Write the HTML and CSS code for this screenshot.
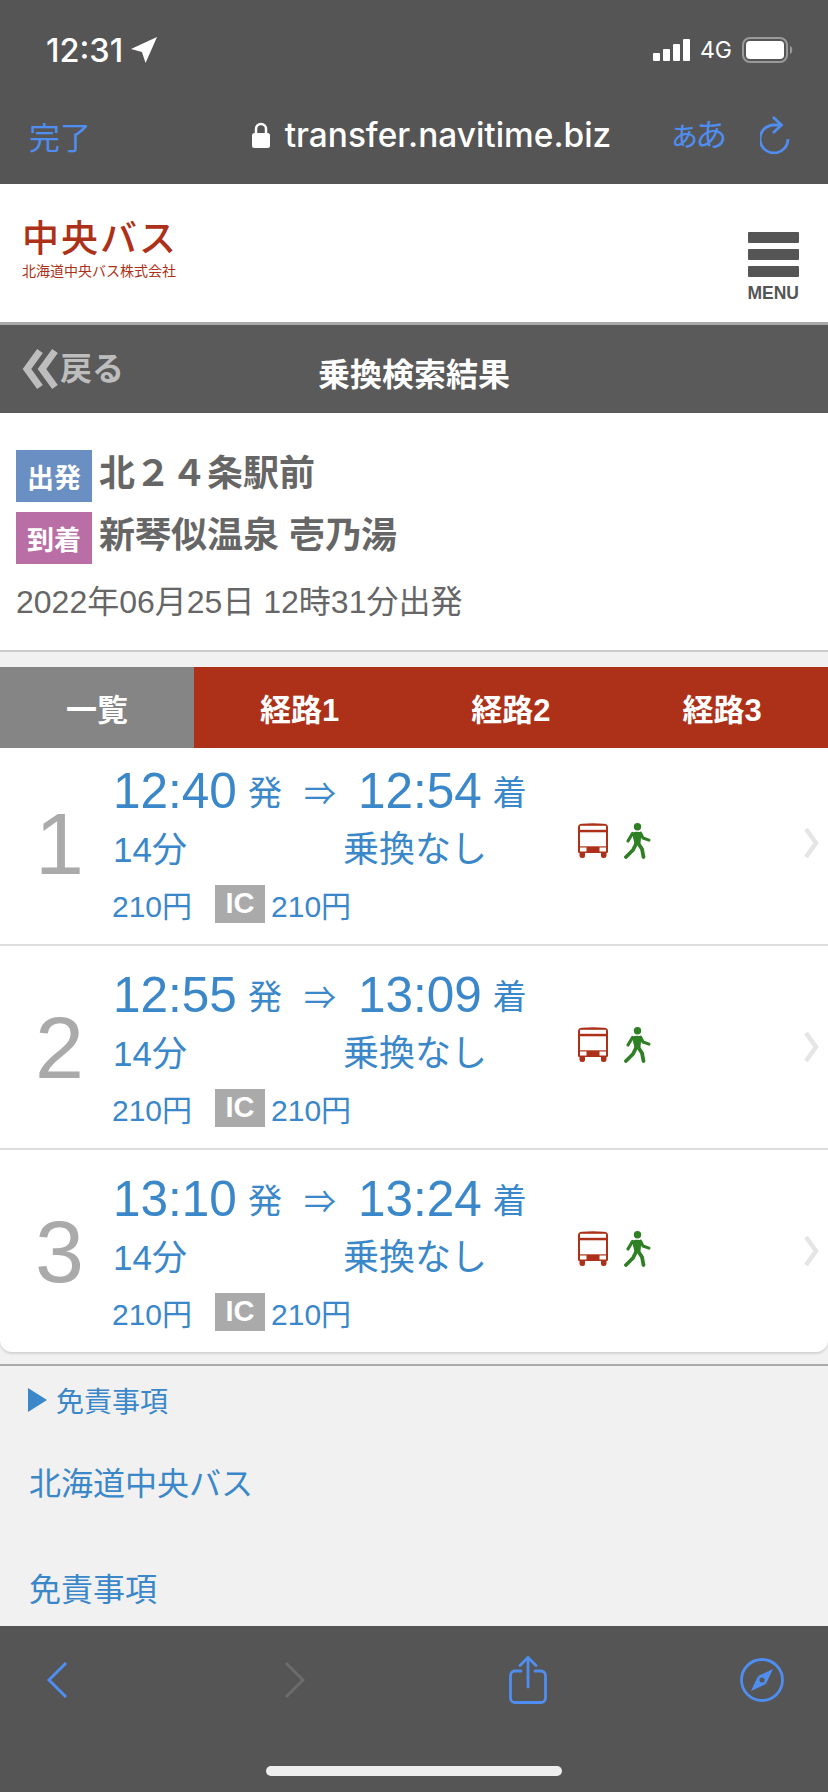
FILE: index.html
```html
<!DOCTYPE html>
<html lang="ja">
<head>
    <meta charset="UTF-8">
    <meta name="viewport" content="width=device-width, initial-scale=1.0">
    <title>乗換検索結果</title>
    <link rel="stylesheet" href="styles.css">
</head>
<body>
    <div class="status-bar">
        <div class="status-time">12:31
            <svg width="26" height="26" viewBox="0 0 25 25"><path d="M25 0 L0 11.500 L10.500 14.500 L14 25 Z" fill="#fff"/></svg>
        </div>
        <div class="status-right">
            <div class="signal"><span class="s1"></span><span class="s2"></span><span class="s3"></span><span class="s4"></span></div>
            <span class="network">4G</span>
            <svg width="52" height="26" viewBox="0 0 52 26"><rect x="1" y="1" width="44" height="24" rx="7" fill="none" stroke="#9a9a9a" stroke-width="2"/><rect x="4" y="4" width="38" height="18" rx="4" fill="#fff"/><path d="M48 9 C51 10 51 16 48 17 Z" fill="#9a9a9a"/></svg>
        </div>
    </div>
    <div class="url-bar">
        <span class="done">完了</span>
        <div class="url">
            <svg width="18" height="26" viewBox="0 0 18 26"><path d="M4 12 V7 a5 5 0 0 1 10 0 V12" fill="none" stroke="#fff" stroke-width="2.500"/><rect x="0" y="11" width="18" height="15" rx="2.500" fill="#fff"/></svg>
            <span>transfer.navitime.biz</span>
        </div>
        <span class="aa">ぁあ</span>
        <svg width="32" height="38" viewBox="0 0 32 38"><path d="M20 9 H14 A14 14 0 1 0 28 23" fill="none" stroke="#4f8ef0" stroke-width="2.800"/><path d="M13 1 L21.500 9 L13 17" fill="none" stroke="#4f8ef0" stroke-width="2.800"/></svg>
    </div>

    <header class="site-header">
        <div class="logo">
            <div class="logo-main">中央バス</div>
            <div class="logo-sub">北海道中央バス株式会社</div>
        </div>
        <div class="menu">
            <span class="menu-bar"></span>
            <span class="menu-bar"></span>
            <span class="menu-bar"></span>
            <span class="menu-label">MENU</span>
        </div>
    </header>

    <div class="title-bar">
        <div class="back">
            <svg width="36" height="42" viewBox="0 0 36 42"><path d="M18 3 L5 21 L18 39 M33 3 L20 21 L33 39" fill="none" stroke="#bdbdbd" stroke-width="7"/></svg>
            <span class="back-label">戻る</span>
        </div>
        <h1>乗換検索結果</h1>
    </div>

    <section class="search-info">
        <div class="place"><span class="badge badge-from">出発</span><span class="place-name">北２４条駅前</span></div>
        <div class="place"><span class="badge badge-to">到着</span><span class="place-name">新琴似温泉 壱乃湯</span></div>
        <p class="search-date">2022年06月25日 12時31分出発</p>
    </section>

    <nav class="tabs">
        <div class="tab tab-list">一覧</div>
        <div class="tab">経路1</div>
        <div class="tab">経路2</div>
        <div class="tab">経路3</div>
    </nav>

    <div class="routes">
        <div class="route">
            <div class="route-num">1</div>
            <div class="route-body">
                <div class="route-times"><span class="t">12:40</span><span class="u">発</span><span class="arrow">⇒</span><span class="t">12:54</span><span class="u">着</span></div>
                <div class="route-mid"><span class="mins">14分</span><span class="transfer">乗換なし</span></div>
                <div class="route-fare"><span class="cash">210円</span><span class="ic">IC</span><span>210円</span></div>
            </div>
            <div class="route-icons">
                <svg width="30" height="35" viewBox="0 0 30 35"><use href="#bus"/></svg>
                <svg width="27" height="36" viewBox="0 0 27 36"><use href="#walk"/></svg>
            </div>
            <svg class="route-chevron" width="16" height="32" viewBox="0 0 16 32"><path d="M3 2 L13 16 L3 30" fill="none" stroke="#e5e5e5" stroke-width="4.500"/></svg>
        </div>
        <div class="route">
            <div class="route-num">2</div>
            <div class="route-body">
                <div class="route-times"><span class="t">12:55</span><span class="u">発</span><span class="arrow">⇒</span><span class="t">13:09</span><span class="u">着</span></div>
                <div class="route-mid"><span class="mins">14分</span><span class="transfer">乗換なし</span></div>
                <div class="route-fare"><span class="cash">210円</span><span class="ic">IC</span><span>210円</span></div>
            </div>
            <div class="route-icons">
                <svg width="30" height="35" viewBox="0 0 30 35"><use href="#bus"/></svg>
                <svg width="27" height="36" viewBox="0 0 27 36"><use href="#walk"/></svg>
            </div>
            <svg class="route-chevron" width="16" height="32" viewBox="0 0 16 32"><path d="M3 2 L13 16 L3 30" fill="none" stroke="#e5e5e5" stroke-width="4.500"/></svg>
        </div>
        <div class="route">
            <div class="route-num">3</div>
            <div class="route-body">
                <div class="route-times"><span class="t">13:10</span><span class="u">発</span><span class="arrow">⇒</span><span class="t">13:24</span><span class="u">着</span></div>
                <div class="route-mid"><span class="mins">14分</span><span class="transfer">乗換なし</span></div>
                <div class="route-fare"><span class="cash">210円</span><span class="ic">IC</span><span>210円</span></div>
            </div>
            <div class="route-icons">
                <svg width="30" height="35" viewBox="0 0 30 35"><use href="#bus"/></svg>
                <svg width="27" height="36" viewBox="0 0 27 36"><use href="#walk"/></svg>
            </div>
            <svg class="route-chevron" width="16" height="32" viewBox="0 0 16 32"><path d="M3 2 L13 16 L3 30" fill="none" stroke="#e5e5e5" stroke-width="4.500"/></svg>
        </div>
    </div>

    <footer class="page-foot">
        <div class="foot-head"><span class="tri"></span>免責事項</div>
        <div class="foot-link">北海道中央バス</div>
        <div class="foot-link">免責事項</div>
    </footer>

    <div class="toolbar">
        <div class="toolbar-icons">
            <svg width="22" height="38" viewBox="0 0 22 38"><path d="M20 2 L3 19 L20 36" fill="none" stroke="#4f8ef0" stroke-width="3"/></svg>
            <svg width="22" height="38" viewBox="0 0 22 38"><path d="M2 2 L19 19 L2 36" fill="none" stroke="#6b6b6b" stroke-width="3"/></svg>
            <svg width="38" height="48" viewBox="0 0 38 48"><path d="M12 15 H6 a4.500 4.500 0 0 0 -4.500 4.500 V42 a4.500 4.500 0 0 0 4.500 4.500 H32 a4.500 4.500 0 0 0 4.500 -4.500 V19.500 a4.500 4.500 0 0 0 -4.500 -4.500 H26 M19 31 V2 M11 9.500 L19 1.500 L27 9.500" fill="none" stroke="#4f8ef0" stroke-width="2.800" stroke-linecap="round"/></svg>
            <svg width="44" height="44" viewBox="0 0 44 44"><circle cx="22" cy="22" r="20.500" fill="none" stroke="#4f8ef0" stroke-width="2.800"/><path d="M33 11 L26 26 L18 18 Z" fill="#4f8ef0"/><path d="M11 33 L18 18 L26 26 Z" fill="#4f8ef0"/><circle cx="22" cy="22" r="2.500" fill="#555"/></svg>
        </div>
        <div class="home-bar"></div>
    </div>

    <svg class="defs" width="0" height="0">
        <symbol id="bus" viewBox="0 0 30 35">
            <path d="M0 4 Q0 1 4 .8 Q15 -.5 26 .8 Q30 1 30 4 V29 Q30 30 28.500 30 V33 Q28.500 35 26 35 H25 Q23 35 23 33 V30 H7 V33 Q7 35 5 35 H4 Q1.500 35 1.500 33 V30 Q0 30 0 29 Z" fill="#ad3118"/>
            <rect x="2" y="2.800" width="26" height="4" fill="#fff"/>
            <rect x="2" y="9.300" width="26" height="14" fill="#fff"/>
            <rect x="2" y="24.500" width="6.500" height="4" fill="#fff"/>
            <rect x="21.500" y="24.500" width="6.500" height="4" fill="#fff"/>
        </symbol>
        <symbol id="walk" viewBox="0 0 27 36">
            <circle cx="13.500" cy="3.800" r="3.700" fill="#2f7f24"/>
            <path d="M8 10 Q13 7.500 17.500 10 L16.500 20 L11 23 Z" fill="#2f7f24"/>
            <g fill="none" stroke="#2f7f24" stroke-linecap="round" stroke-linejoin="round">
                <path d="M8.500 10.500 L4 18" stroke-width="3.200"/>
                <path d="M16.500 10 L19 15 L25 17.200" stroke-width="3"/>
                <path d="M12.500 20 L9 27 L2 34" stroke-width="3.800"/>
                <path d="M14 20 L18 26 L19.500 34" stroke-width="3.800"/>
            </g>
        </symbol>
    </svg>
</body>
</html>
```

FILE: styles.css
```css
* {
    box-sizing: border-box;
}
html, body {
    margin: 0;
    padding: 0;
}
body {
    width: 828px;
    height: 1792px;
    overflow: hidden;
    display: flex;
    flex-direction: column;
    background-color: #f1f1f1;
    font-family: "Liberation Sans", "Noto Sans CJK JP", sans-serif;
}

/* iOS chrome */
.status-bar {
    height: 86px;
    flex: none;
    background-color: #555;
    color: white;
    display: flex;
    justify-content: space-between;
    align-items: center;
    padding: 14px 34px 0 46px;
    font-family: Inter, sans-serif;
}
.status-time {
    display: flex;
    align-items: center;
    gap: 8px;
    font-size: 32.500px;
    font-weight: 500;
}
.status-right {
    display: flex;
    align-items: center;
    gap: 10px;
}
.signal {
    display: flex;
    align-items: flex-end;
    gap: 3px;
    height: 22px;
}
.signal span {
    width: 7px;
    background: white;
    border-radius: 1px;
}
.s1 { height: 8px; }
.s2 { height: 12px; }
.s3 { height: 17px; }
.s4 { height: 22px; }
.network {
    font-size: 23px;
    font-weight: 400;
}
.url-bar {
    height: 98px;
    flex: none;
    background-color: #555;
    display: flex;
    align-items: center;
    padding: 0 36px 0 29px;
    color: #4f8ef0;
    font-family: "Noto Sans CJK JP", sans-serif;
}
.done {
    font-size: 31px;
    width: 223px;
}
.url {
    display: flex;
    align-items: center;
    gap: 15px;
    width: 417px;
    color: white;
    font-family: Inter, sans-serif;
    font-size: 33.400px;
    font-weight: 500;
}
.aa {
    font-size: 32px;
    letter-spacing: -5px;
    width: 92px;
    margin-top: -6px;
}

/* site header */
.site-header {
    height: 141px;
    flex: none;
    background: white;
    border-bottom: 3px solid #aaa;
    display: flex;
    justify-content: space-between;
    padding: 0 29px 0 22px;
}
.logo {
    padding-top: 33px;
    color: #ad3118;
}
.logo-main {
    font-size: 37px;
    line-height: 46px;
    letter-spacing: 2px;
    font-weight: 500;
}
.logo-sub {
    font-size: 14px;
    line-height: 18px;
    margin-top: -1px;
}
.menu {
    padding-top: 48px;
    display: flex;
    flex-direction: column;
    align-items: center;
    gap: 6px;
}
.menu-bar {
    width: 51px;
    height: 11px;
    background-color: #555;
    border-radius: 1px;
}
.menu-label {
    font-size: 17.500px;
    font-weight: bold;
    color: #555;
}
.title-bar {
    height: 88px;
    flex: none;
    background-color: #5a5a5a;
    position: relative;
    display: flex;
    align-items: center;
    justify-content: center;
}
.back {
    position: absolute;
    left: 22px;
    top: 23px;
    display: flex;
    align-items: center;
    gap: 2px;
    color: #bdbdbd;
    font-size: 32px;
    font-weight: bold;
}
.back-label {
    margin-top: -6px;
}
h1 {
    margin: 6px 0 0;
    color: white;
    font-size: 32px;
    font-weight: bold;
}

/* search info */
.search-info {
    height: 239px;
    flex: none;
    background: white;
    border-bottom: 2px solid #ccc;
    padding: 37px 16px 0;
    color: #666;
}
.place {
    display: flex;
    align-items: center;
    gap: 7px;
    margin-bottom: 10px;
}
.badge {
    width: 76px;
    height: 52px;
    display: flex;
    align-items: center;
    justify-content: center;
    color: white;
    font-size: 27px;
    font-weight: bold;
}
.badge-from { background-color: #6a8fc3; }
.badge-to { background-color: #b96fa6; }
.place-name {
    font-size: 36px;
    font-weight: bold;
    margin-top: -12px;
}
.search-date {
    margin: 12px 0 0;
    font-size: 32px;
}

/* tabs */
.tabs {
    margin-top: 15px;
    height: 81px;
    flex: none;
    display: flex;
    background-color: #ad3118;
}
.tab {
    width: 211.300px;
    display: flex;
    align-items: center;
    justify-content: center;
    color: white;
    font-size: 31px;
    font-weight: bold;
}
.tab-list {
    width: 194px;
    background-color: #858585;
}

/* route list */
.routes {
    flex: none;
    background: white;
    border-radius: 0 0 12px 12px;
    box-shadow: 0 2px 2px rgba(0, 0, 0, 0.12);
}
.route {
    height: 204px;
    padding-top: 20px;
    border-bottom: 2px solid #ddd;
    display: flex;
    align-items: flex-start;
    color: #3a87c9;
}
.route:first-child {
    height: 198px;
    padding-top: 14px;
}
.route:last-child {
    height: 202px;
    border-bottom: none;
}
.route-num {
    width: 113px;
    flex: none;
    margin-top: 31px;
    text-align: center;
    padding-left: 6px;
    font-size: 88px;
    color: #aaa;
}
.route-body {
    width: 465px;
    flex: none;
}
.route-times {
    display: flex;
    align-items: baseline;
    height: 59.500px;
}
.t {
    font-size: 49.500px;
}
.u {
    font-size: 34px;
    margin: 0 11px;
    transform: translateY(-3px);
}
.arrow {
    font-size: 32px;
    width: 54px;
    margin-left: 11px;
    transform: translateY(-3px);
}
.route-mid {
    display: flex;
    height: 49px;
    margin-bottom: 10px;
    align-items: center;
}
.mins {
    width: 230px;
    font-size: 35px;
}
.transfer {
    font-size: 36px;
}
.route-fare {
    display: flex;
    align-items: center;
    font-size: 30px;
    height: 46px;
    margin-left: -1px;
}
.cash {
    margin-right: 23px;
}
.ic {
    width: 50px;
    height: 38px;
    margin-right: 6px;
    background-color: #aaa;
    color: white;
    font-size: 29px;
    font-weight: bold;
    display: flex;
    align-items: center;
    justify-content: center;
}
.route-icons {
    width: 225px;
    flex: none;
    display: flex;
    gap: 16px;
    margin-top: 61px;
}
.route-chevron {
    flex: none;
    margin-top: 65px;
}
.defs {
    position: absolute;
}

/* bottom of page */
.page-foot {
    margin-top: 12px;
    flex: 1;
    border-top: 2px solid #aaa;
    padding: 14px 29px 0;
    color: #3a87c9;
    overflow: hidden;
}
.foot-head {
    display: flex;
    align-items: center;
    font-size: 28px;
    margin-left: -1px;
}
.tri {
    width: 0;
    height: 0;
    margin-right: 9px;
    border-left: 19px solid #3a87c9;
    border-top: 12px solid transparent;
    border-bottom: 12px solid transparent;
}
.foot-link {
    font-size: 32px;
    margin-top: 38px;
}
.foot-link + .foot-link {
    margin-top: 60px;
}
.toolbar {
    height: 166px;
    flex: none;
    background-color: #555;
    position: relative;
}
.toolbar-icons {
    height: 108px;
    padding-left: 46px;
    display: grid;
    grid-template-columns: 238px 225px 231px auto;
    justify-items: start;
    align-items: center;
}
.home-bar {
    position: absolute;
    left: 266px;
    top: 140px;
    width: 296px;
    height: 10px;
    border-radius: 5px;
    background-color: #eee;
}
```
